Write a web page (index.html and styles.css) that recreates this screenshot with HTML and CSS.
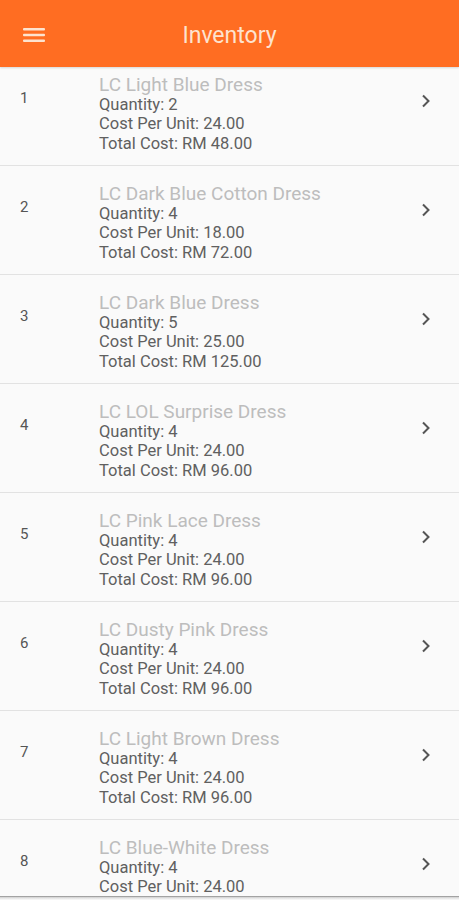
FILE: index.html
```html
<!DOCTYPE html>
<html lang="en">
<head>
  <meta charset="UTF-8" />
  <meta name="viewport" content="width=device-width, initial-scale=1.0"/>
  <title>Inventory</title>
  <link rel="stylesheet" href="styles.css">
</head>
<body>
  <header class="topbar">
    <button class="menu-btn" aria-label="Menu">
      <svg width="22" height="16" viewBox="0 0 22 16">
        <rect x="0" y="1" width="22" height="2.4" rx="1" fill="#fde3cf"/>
        <rect x="0" y="6.8" width="22" height="2.4" rx="1" fill="#fde3cf"/>
        <rect x="0" y="12.6" width="22" height="2.4" rx="1" fill="#fde3cf"/>
      </svg>
    </button>
    <h1>Inventory</h1>
  </header>

  <ul class="list">
    <li class="row">
      <span class="num">1</span>
      <div class="info">
        <div class="name">LC Light Blue Dress</div>
        <div>Quantity: 2</div>
        <div>Cost Per Unit: 24.00</div>
        <div>Total Cost: RM 48.00</div>
      </div>
      <span class="chev"><svg width="10" height="14" viewBox="0 0 10 14"><path d="M2 1.5 L7.5 7 L2 12.5" fill="none" stroke="#555" stroke-width="2"/></svg></span>
    </li>
    <li class="row">
      <span class="num">2</span>
      <div class="info">
        <div class="name">LC Dark Blue Cotton Dress</div>
        <div>Quantity: 4</div>
        <div>Cost Per Unit: 18.00</div>
        <div>Total Cost: RM 72.00</div>
      </div>
      <span class="chev"><svg width="10" height="14" viewBox="0 0 10 14"><path d="M2 1.5 L7.5 7 L2 12.5" fill="none" stroke="#555" stroke-width="2"/></svg></span>
    </li>
    <li class="row">
      <span class="num">3</span>
      <div class="info">
        <div class="name">LC Dark Blue Dress</div>
        <div>Quantity: 5</div>
        <div>Cost Per Unit: 25.00</div>
        <div>Total Cost: RM 125.00</div>
      </div>
      <span class="chev"><svg width="10" height="14" viewBox="0 0 10 14"><path d="M2 1.5 L7.5 7 L2 12.5" fill="none" stroke="#555" stroke-width="2"/></svg></span>
    </li>
    <li class="row">
      <span class="num">4</span>
      <div class="info">
        <div class="name">LC LOL Surprise Dress</div>
        <div>Quantity: 4</div>
        <div>Cost Per Unit: 24.00</div>
        <div>Total Cost: RM 96.00</div>
      </div>
      <span class="chev"><svg width="10" height="14" viewBox="0 0 10 14"><path d="M2 1.5 L7.5 7 L2 12.5" fill="none" stroke="#555" stroke-width="2"/></svg></span>
    </li>
    <li class="row">
      <span class="num">5</span>
      <div class="info">
        <div class="name">LC Pink Lace Dress</div>
        <div>Quantity: 4</div>
        <div>Cost Per Unit: 24.00</div>
        <div>Total Cost: RM 96.00</div>
      </div>
      <span class="chev"><svg width="10" height="14" viewBox="0 0 10 14"><path d="M2 1.5 L7.5 7 L2 12.5" fill="none" stroke="#555" stroke-width="2"/></svg></span>
    </li>
    <li class="row">
      <span class="num">6</span>
      <div class="info">
        <div class="name">LC Dusty Pink Dress</div>
        <div>Quantity: 4</div>
        <div>Cost Per Unit: 24.00</div>
        <div>Total Cost: RM 96.00</div>
      </div>
      <span class="chev"><svg width="10" height="14" viewBox="0 0 10 14"><path d="M2 1.5 L7.5 7 L2 12.5" fill="none" stroke="#555" stroke-width="2"/></svg></span>
    </li>
    <li class="row">
      <span class="num">7</span>
      <div class="info">
        <div class="name">LC Light Brown Dress</div>
        <div>Quantity: 4</div>
        <div>Cost Per Unit: 24.00</div>
        <div>Total Cost: RM 96.00</div>
      </div>
      <span class="chev"><svg width="10" height="14" viewBox="0 0 10 14"><path d="M2 1.5 L7.5 7 L2 12.5" fill="none" stroke="#555" stroke-width="2"/></svg></span>
    </li>
    <li class="row">
      <span class="num">8</span>
      <div class="info">
        <div class="name">LC Blue-White Dress</div>
        <div>Quantity: 4</div>
        <div>Cost Per Unit: 24.00</div>
        <div>Total Cost: RM 96.00</div>
      </div>
      <span class="chev"><svg width="10" height="14" viewBox="0 0 10 14"><path d="M2 1.5 L7.5 7 L2 12.5" fill="none" stroke="#555" stroke-width="2"/></svg></span>
    </li>
  </ul>

  <div class="bottom-edge"></div>
</body>
</html>
```

FILE: styles.css
```css
body {
  margin: 0;
  font-family: Roboto, 'Noto Sans', sans-serif;
  background: #fafafa;
  color: #555;
  height: 900px;
  overflow: hidden;
}

.topbar {
  height: 67px;
  background: #ff6d22;
  display: flex;
  align-items: center;
  position: relative;
  box-shadow: 0 1px 2px rgba(0, 0, 0, 0.15);
  z-index: 2;
}

.menu-btn {
  background: none;
  border: none;
  padding: 0;
  margin-left: 23px;
  margin-top: 3px;
  width: 22px;
  height: 16px;
  display: flex;
}

.topbar h1 {
  position: absolute;
  left: 0;
  right: 0;
  top: 22px;
  margin: 0;
  text-align: center;
  font-size: 23px;
  line-height: 28px;
  font-weight: 400;
  color: #fde3cf;
  pointer-events: none;
}

.list {
  list-style: none;
  margin: -10px 0 0;
  padding: 0;
}

.row {
  height: 108px;
  border-bottom: 1px solid #e2e2e2;
  display: flex;
  align-items: center;
  background: #fafafa;
}

.num {
  width: 99px;
  padding-left: 20px;
  box-sizing: border-box;
  font-size: 15px;
  color: #555;
  align-self: flex-start;
  margin-top: 32px;
}

.info {
  flex: 1;
  padding-top: 6px;
  font-size: 16.5px;
  line-height: 19.6px;
  color: #606060;
}

.info .name {
  font-size: 19px;
  line-height: 20px;
  color: #bdbdbd;
}

.chev {
  width: 38px;
  align-self: flex-start;
  margin-top: 37px;
  display: flex;
}

.bottom-edge {
  position: fixed;
  left: 0;
  right: 0;
  top: 896px;
  height: 4px;
  background: linear-gradient(#888, #ddd 40%, rgba(250, 250, 250, 0.6));
}
```
